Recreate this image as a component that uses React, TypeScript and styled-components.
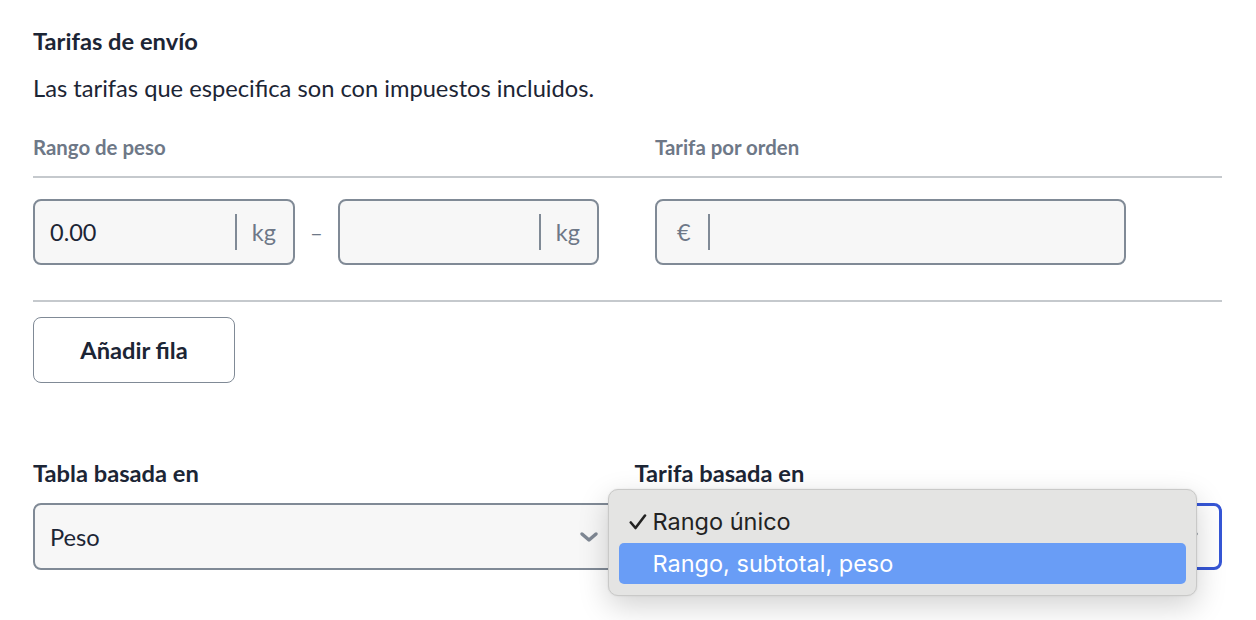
import React from 'react';
import styled, { createGlobalStyle } from 'styled-components';

const GlobalStyle = createGlobalStyle`
  html, body {
    margin: 0;
    padding: 0;
    background: #ffffff;
  }
  body {
    font-family: Lato, "Open Sans", sans-serif;
    color: #1c2535;
  }
`;

const Page = styled.div`
  padding: 27px 34px 0 33px;
  width: 1256px;
  height: 620px;
  box-sizing: border-box;
  overflow: hidden;
`;

const Title = styled.h2`
  margin: 0;
  font-size: 23.7px;
  line-height: 28px;
  font-weight: 700;
  color: #1c2535;
`;

const Subtitle = styled.p`
  margin: 18px 0 0;
  font-size: 23.7px;
  line-height: 30px;
  font-weight: 400;
  color: #1c2535;
`;

const Table = styled.div`
  margin-top: 32px;
`;

const Row = styled.div<{ $head?: boolean }>`
  display: grid;
  grid-template-columns: 622px 1fr;
  border-bottom: 2px solid #c5c9cd;
  padding: ${p => (p.$head ? '0 0 17px' : '21px 0 35px')};
`;

const HeadLabel = styled.div`
  font-size: 20.4px;
  line-height: 24px;
  font-weight: 700;
  color: #6e7887;
`;

const RangeCell = styled.div`
  display: flex;
  align-items: center;
`;

const Dash = styled.span`
  width: 43px;
  text-align: center;
  color: #6e7887;
  font-size: 22px;
`;

const InputBox = styled.div<{ $width: number }>`
  display: flex;
  align-items: center;
  width: ${p => p.$width}px;
  height: 66px;
  box-sizing: border-box;
  border: 2px solid #808a96;
  border-radius: 8px;
  background: #f7f7f7;
  font-size: 23.5px;
`;

const Field = styled.div`
  flex: 1;
  padding-left: 15px;
  color: #1c2535;
`;

const Addon = styled.div<{ $side: 'left' | 'right' }>`
  display: flex;
  align-items: center;
  height: 36px;
  color: #6e7887;
  ${p =>
    p.$side === 'right'
      ? 'border-left: 2px solid #808a96; padding: 0 17px 0 15px;'
      : 'border-right: 2px solid #808a96; padding: 0 17px 0 20px;'}
`;

const AddButton = styled.button`
  margin-top: 15px;
  width: 202px;
  height: 66px;
  border: 1.5px solid #808a96;
  border-radius: 8px;
  background: #ffffff;
  font-family: Lato, sans-serif;
  font-size: 23.7px;
  font-weight: 700;
  color: #1c2535;
`;

const SelectGrid = styled.div`
  margin-top: 76px;
  display: grid;
  grid-template-columns: 1fr 1fr;
  column-gap: 14px;
`;

const SelectCol = styled.div`
  position: relative;
`;

const SelectLabel = styled.div`
  font-size: 23.7px;
  line-height: 28px;
  font-weight: 700;
  color: #1c2535;
  margin-bottom: 16px;
`;

const Select = styled.div<{ $focused?: boolean }>`
  display: flex;
  align-items: center;
  justify-content: space-between;
  height: 67px;
  box-sizing: border-box;
  padding: 0 20px 0 15px;
  border: 2px solid #808a96;
  border-radius: 8px;
  background: #f7f7f7;
  font-size: 23.7px;
  color: #1c2535;
  ${p => p.$focused && 'border: 3px solid #3656d6; background: #ffffff; justify-content: flex-end;'}
`;

const Popup = styled.div`
  position: absolute;
  left: -27px;
  top: 30px;
  width: 589px;
  box-sizing: border-box;
  padding: 11px 10px;
  background: #e4e4e3;
  border: 1px solid #c9c9c8;
  border-radius: 10px;
  box-shadow: 0 10px 30px rgba(0, 0, 0, 0.18), 0 0 2px rgba(0, 0, 0, 0.1);
  font-family: Inter, "Noto Sans", sans-serif;
  font-size: 23.5px;
  display: flex;
  flex-direction: column;
  gap: 1px;
`;

const Option = styled.div<{ $active?: boolean }>`
  display: flex;
  align-items: center;
  height: 41px;
  padding-left: 10px;
  border-radius: 5px;
  color: ${p => (p.$active ? '#ffffff' : '#222222')};
  background: ${p => (p.$active ? '#699df6' : 'transparent')};
`;

const CheckSlot = styled.span`
  display: inline-flex;
  align-items: center;
  width: 24px;
`;

const CheckMark = () => (
  <svg width="18" height="16" viewBox="0 0 18 16">
    <polyline
      points="1.8,8.5 6.5,14 16,1.5"
      fill="none"
      stroke="#222222"
      strokeWidth="2.6"
      strokeLinecap="round"
      strokeLinejoin="round"
    />
  </svg>
);

const Chevron = () => (
  <svg width="20" height="14" viewBox="0 0 20 14">
    <polyline
      points="3,4 10,10 17,4"
      fill="none"
      stroke="#7f8894"
      strokeWidth="3.5"
      strokeLinecap="round"
      strokeLinejoin="round"
    />
  </svg>
);

export default function App() {
  return (
    <>
      <GlobalStyle />
      <Page>
        <Title>Tarifas de envío</Title>
        <Subtitle>Las tarifas que especifica son con impuestos incluidos.</Subtitle>

        <Table>
          <Row $head>
            <HeadLabel>Rango de peso</HeadLabel>
            <HeadLabel>Tarifa por orden</HeadLabel>
          </Row>
          <Row>
            <RangeCell>
              <InputBox $width={262}>
                <Field>0.00</Field>
                <Addon $side="right">kg</Addon>
              </InputBox>
              <Dash>–</Dash>
              <InputBox $width={261}>
                <Field />
                <Addon $side="right">kg</Addon>
              </InputBox>
            </RangeCell>
            <RangeCell>
              <InputBox $width={471}>
                <Addon $side="left">€</Addon>
                <Field />
              </InputBox>
            </RangeCell>
          </Row>
        </Table>

        <AddButton>Añadir fila</AddButton>

        <SelectGrid>
          <SelectCol>
            <SelectLabel>Tabla basada en</SelectLabel>
            <Select>
              <span>Peso</span>
              <Chevron />
            </Select>
          </SelectCol>
          <SelectCol>
            <SelectLabel>Tarifa basada en</SelectLabel>
            <Select $focused>
              <Chevron />
            </Select>
            <Popup>
              <Option>
                <CheckSlot>
                  <CheckMark />
                </CheckSlot>
                Rango único
              </Option>
              <Option $active>
                <CheckSlot />
                Rango, subtotal, peso
              </Option>
            </Popup>
          </SelectCol>
        </SelectGrid>
      </Page>
    </>
  );
}
